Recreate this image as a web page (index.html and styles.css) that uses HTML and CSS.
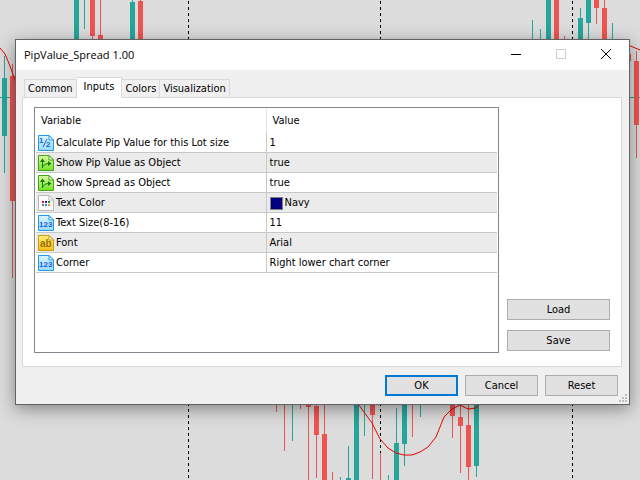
FILE: index.html
```html
<!DOCTYPE html>
<html lang="en">
  <head>
    <meta charset="UTF-8" />
    <meta name="viewport" content="width=device-width, initial-scale=1.0" />
    <title>PipValue_Spread 1.00</title>
    <link rel="stylesheet" href="styles.css" />
  </head>
  <body>
    <svg class="chart" viewBox="0 0 640 480" preserveAspectRatio="xMinYMin slice" aria-hidden="true">
      <!-- period separators -->
      <path class="separator" d="M188.500 1V480M380.500 1V453M572.500 1V480" />
      <path class="level" d="M0 97.500H640" />
      <!-- rising candles -->
      <path class="wick up" d="M84.500 0V29M132.500 0V40M4.500 56V173M532.500 20V40M540.500 29V40M580.500 8V40M588.500 0V40M612.500 23V40M292.500 400V441M340.500 477V480M348.500 446V480M364.500 400V436M388.500 475V480M396.500 408V480M404.500 400V466M420.500 400V417M476.500 400V477" />
      <path class="body-up" d="M74 0h5v40h-5zM130 2h5v38h-5zM2 78h5v58h-5zM546 0h5v40h-5zM578 18h5v22h-5zM586 0h5v23h-5zM346 478h5v2h-5zM354 400h5v80h-5zM394 443h5v37h-5zM402 400h5v44h-5zM474 400h5v66h-5z" />
      <!-- falling candles -->
      <path class="wick down" d="M92.500 0V40M100.500 0V40M140.500 0V40M12.500 64V278M564.500 36V40M596.500 0V24M604.500 0V40M636.500 51V158M276.500 400V412M284.500 400V451M300.500 400V409M308.500 400V480M316.500 400V478M324.500 400V480M332.500 472V480M372.500 400V479M380.500 453V480M412.500 400V437M452.500 400V438M460.500 405V473M468.500 400V480" />
      <path class="body-down" d="M90 0h5v36h-5zM98 35h5v5h-5zM138 1h5v39h-5zM10 76h5v125h-5zM554 0h5v40h-5zM594 0h5v8h-5zM602 8h5v32h-5zM626 54h5v7h-5zM634 61h5v64h-5zM306 400h5v7h-5zM314 406h5v29h-5zM322 434h5v46h-5zM370 400h5v15h-5zM450 400h5v16h-5zM458 417h5v9h-5zM466 425h5v42h-5z" />
      <!-- moving average -->
      <path class="average" d="M0 48L5 54L10 66L16 83M628 45L640 50M356 401L364 412L372 423L380 439L388 448L396 453L404 455H412L420 452L428 447L436 437L444 417L452 409L460 405L468 409L476 408L480 403" />
    </svg>

    <svg class="symbols" aria-hidden="true">
      <defs>
        <linearGradient id="blue" x2="0" y2="1">
          <stop offset="0" stop-color="#d9f3ff" />
          <stop offset="1" stop-color="#9ad9fc" />
        </linearGradient>
        <linearGradient id="green" x2="0" y2="1">
          <stop offset="0" stop-color="#dcfaa0" />
          <stop offset="1" stop-color="#74e02a" />
        </linearGradient>
        <linearGradient id="yellow" x2="0" y2="1">
          <stop offset="0" stop-color="#fff07a" />
          <stop offset="1" stop-color="#f5be17" />
        </linearGradient>
      </defs>
      <symbol id="page" viewBox="0 0 16 16">
        <path d="M.5.5H11L15.500 5V15.500H.5Z" stroke="currentColor" />
        <path d="M11 .5V5H15.500Z" fill="#fff" stroke="currentColor" />
      </symbol>
    </svg>

    <main class="dialog">
      <header class="titlebar">
        <h1>PipValue_Spread 1.00</h1>
        <div class="window-buttons">
          <button aria-label="Minimize"><svg viewBox="0 0 10 10"><path d="M0 5.500H10" /></svg></button>
          <button aria-label="Maximize" disabled><svg viewBox="0 0 10 10"><path d="M.5.5h9v9h-9z" /></svg></button>
          <button aria-label="Close"><svg viewBox="0 0 10 10"><path d="M0 0L10 10M10 0L0 10" /></svg></button>
        </div>
      </header>

      <nav class="tabs" role="tablist">
        <button role="tab">Common</button>
        <button role="tab" class="selected" aria-selected="true">Inputs</button>
        <button role="tab">Colors</button>
        <button role="tab">Visualization</button>
      </nav>

      <section class="panel">
        <div class="list">
          <table>
            <thead>
              <tr><th>Variable</th><th>Value</th></tr>
            </thead>
            <tbody>
              <tr>
                <td><svg class="icon blue" viewBox="0 0 16 16"><use href="#page" /><text x="1" y="8" class="digits">1</text><path d="M5 12L9 4" stroke="#1b62d0" /><text x="8" y="12" class="digits">2</text></svg>Calculate Pip Value for this Lot size</td>
                <td>1</td>
              </tr>
              <tr>
                <td><svg class="icon green" viewBox="0 0 16 16"><use href="#page" /><path class="arrows" d="M4.500 13V5M4.500 12C6 9.500 8 8.500 11 8.500" /><path class="heads" d="M2 7L4.500 3.500L7 7ZM10 6L13.500 8.500L10 11Z" /></svg>Show Pip Value as Object</td>
                <td>true</td>
              </tr>
              <tr>
                <td><svg class="icon green" viewBox="0 0 16 16"><use href="#page" /><path class="arrows" d="M4.500 13V5M4.500 12C6 9.500 8 8.500 11 8.500" /><path class="heads" d="M2 7L4.500 3.500L7 7ZM10 6L13.500 8.500L10 11Z" /></svg>Show Spread as Object</td>
                <td>true</td>
              </tr>
              <tr>
                <td><svg class="icon gray" viewBox="0 0 16 16"><use href="#page" /><path d="M4 6h2v2H4z" fill="#e01818" /><path d="M7 6h2v2H7z" fill="#1818e0" /><path d="M10 6h2v2h-2z" fill="#189018" /><path d="M4 9h2v2H4z" fill="#777" /><path d="M7 9h2v2H7z" fill="#2888e0" /><path d="M10 9h2v2h-2z" fill="#f09818" /></svg>Text Color</td>
                <td><span class="swatch"></span>Navy</td>
              </tr>
              <tr>
                <td><svg class="icon blue" viewBox="0 0 16 16"><use href="#page" /><text x="1" y="12" class="digits">123</text></svg>Text Size(8-16)</td>
                <td>11</td>
              </tr>
              <tr>
                <td><svg class="icon yellow" viewBox="0 0 16 16"><use href="#page" /><text x="2" y="12" class="letters">ab</text></svg>Font</td>
                <td>Arial</td>
              </tr>
              <tr>
                <td><svg class="icon blue" viewBox="0 0 16 16"><use href="#page" /><text x="1" y="12" class="digits">123</text></svg>Corner</td>
                <td>Right lower chart corner</td>
              </tr>
            </tbody>
          </table>
        </div>
        <div class="side">
          <button class="btn">Load</button>
          <button class="btn">Save</button>
        </div>
      </section>

      <footer>
        <button class="btn default">OK</button>
        <button class="btn">Cancel</button>
        <button class="btn">Reset</button>
      </footer>
      <svg class="grip" viewBox="0 0 8 8" aria-hidden="true"><path d="M6 0h2v2H6zM3 3h2v2H3zM6 3h2v2H6zM0 6h2v2H0zM3 6h2v2H3zM6 6h2v2H6z" /></svg>
    </main>
  </body>
</html>
```
FILE: styles.css
```css
* {
  box-sizing: border-box;
}

body {
  margin: 0;
  min-height: 100vh;
  padding: 39px 10px 40px 15px;
  background-color: #dcdcdc;
  color: #000;
  font-family: Tahoma, "DejaVu Sans Condensed", sans-serif;
  font-size: 11px;
  line-height: 14px;
}

button {
  font: inherit;
  color: inherit;
  padding: 0;
}

/* chart behind the dialog */
.chart {
  position: absolute;
  top: 0;
  left: 0;
  width: 100%;
  height: 100%;
  fill: none;
}

.symbols {
  position: absolute;
  width: 0;
  height: 0;
}

.separator {
  stroke: #000;
  stroke-dasharray: 3 3;
}

.level,
.up {
  stroke: #26a69a;
}

.down {
  stroke: #ef5350;
}

.body-up {
  fill: #26a69a;
}

.body-down {
  fill: #ef5350;
}

.average {
  stroke: #f00000;
}

/* dialog */
.dialog {
  position: relative;
  border: 1px solid #626262;
  background-color: #f0f0f0;
  box-shadow: 0 4px 16px rgba(0, 0, 0, 0.4);
}

.titlebar {
  display: flex;
  justify-content: space-between;
  height: 30px;
  padding-right: 1px;
  background-color: #fff;
}

h1 {
  margin: 0;
  padding-left: 8px;
  font-family: "Segoe UI", "Open Sans", sans-serif;
  font-size: 11px;
  font-weight: 400;
  line-height: 30px;
}

.window-buttons {
  display: flex;
}

.window-buttons button {
  display: flex;
  align-items: center;
  justify-content: center;
  width: 45px;
  padding-bottom: 2px;
  border: none;
  background: none;
}

.window-buttons svg {
  width: 10px;
  height: 10px;
  overflow: visible;
  fill: none;
  stroke: #000;
}

.window-buttons button:disabled svg {
  stroke: #ccc;
}

/* tabs */
.tabs {
  display: flex;
  align-items: flex-end;
  height: 28px;
  padding: 0 8px;
}

.tabs button {
  height: 19px;
  padding: 0 3px;
  border: 1px solid #d9d9d9;
  border-left-width: 0;
  background-color: #f0f0f0;
}

.tabs button:first-child {
  border-left-width: 1px;
}

.tabs .selected {
  position: relative;
  height: 21px;
  padding: 0 7px 2px;
  border-bottom-color: #fff;
  background-color: #fff;
}

.panel {
  display: flex;
  gap: 8px;
  margin: -1px 7px 0 6px;
  padding: 9px 11px 12px;
  height: 270px;
  border: 1px solid #d9d9d9;
  background-color: #fff;
}

.list {
  flex: 1;
  height: 246px;
  padding: 0 1px;
  border: 1px solid #828790;
}

table {
  width: 100%;
  border-collapse: separate;
  border-spacing: 0;
  table-layout: fixed;
}

th,
td {
  padding: 0 0 0 3px;
  text-align: left;
  font-weight: 400;
  white-space: nowrap;
}

th {
  height: 25px;
  padding-left: 6px;
}

td {
  height: 20px;
  padding-top: 1px;
  border-bottom: 1px solid #c8c8c8;
}

th:first-child {
  padding-left: 5px;
  border-right: 1px solid #e5e5e5;
}

td:first-child {
  padding-left: 2px;
  border-right: 1px solid #c8c8c8;
}

tbody tr:nth-child(even) {
  background-color: #ebebeb;
}

.icon {
  width: 16px;
  height: 16px;
  margin-right: 2px;
  vertical-align: middle;
}

.blue {
  color: #1e9be8;
  fill: url(#blue);
}

.green {
  color: #42a516;
  fill: url(#green);
}

.yellow {
  color: #c99a12;
  fill: url(#yellow);
}

.gray {
  color: #b8b8b8;
  fill: #fafafa;
}

.digits,
.letters {
  font-family: "Liberation Sans", sans-serif;
  font-size: 8px;
  font-weight: 700;
  fill: #1b62d0;
}

.letters {
  font-size: 10px;
  fill: #9a7100;
}

.arrows {
  fill: none;
  stroke: #147a10;
}

.heads {
  fill: #147a10;
}

.swatch {
  display: inline-block;
  width: 13px;
  height: 13px;
  margin-right: 2px;
  border: 1px solid #808080;
  background-color: navy;
  vertical-align: middle;
}

/* buttons */
.side {
  display: flex;
  flex-direction: column;
  justify-content: flex-end;
  gap: 10px;
  width: 103px;
  padding-bottom: 3px;
}

.btn {
  height: 21px;
  border: 1px solid #adadad;
  background-color: #e1e1e1;
}

.default {
  border: 2px solid #0078d7;
}

footer {
  display: flex;
  justify-content: flex-end;
  gap: 7px;
  padding: 8px 11px;
}

footer .btn {
  width: 73px;
}

.grip {
  position: absolute;
  right: 2px;
  bottom: 2px;
  width: 8px;
  height: 8px;
  fill: #bfbfbf;
}
```
